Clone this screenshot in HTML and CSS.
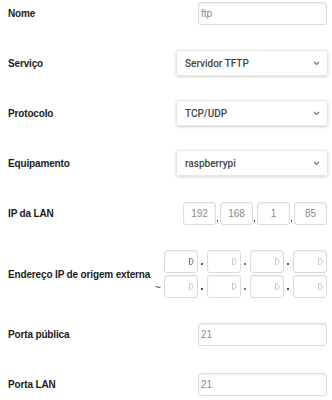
FILE: index.html
```html
<!DOCTYPE html>
<html>
<head>
<meta charset="utf-8">
<link rel="stylesheet" href="styles.css">
</head>
<body>
<div class="form">
  <div class="row">
    <span class="label">Nome</span>
    <div class="input">ftp</div>
  </div>
  <div class="row">
    <span class="label">Serviço</span>
    <div class="select"><span>Servidor TFTP</span><svg class="chev" width="7" height="5" viewBox="0 0 7 5"><polyline points="1,1 3.5,3.5 6,1" fill="none" stroke="#777" stroke-width="1.1"/></svg></div>
  </div>
  <div class="row">
    <span class="label">Protocolo</span>
    <div class="select"><span>TCP/UDP</span><svg class="chev" width="7" height="5" viewBox="0 0 7 5"><polyline points="1,1 3.5,3.5 6,1" fill="none" stroke="#777" stroke-width="1.1"/></svg></div>
  </div>
  <div class="row">
    <span class="label">Equipamento</span>
    <div class="select"><span>raspberrypi</span><svg class="chev" width="7" height="5" viewBox="0 0 7 5"><polyline points="1,1 3.5,3.5 6,1" fill="none" stroke="#777" stroke-width="1.1"/></svg></div>
  </div>
  <div class="row">
    <span class="label">IP da LAN</span>
    <div class="ip">
      <div class="oct">192</div><span class="dot"></span>
      <div class="oct">168</div><span class="dot"></span>
      <div class="oct">1</div><span class="dot"></span>
      <div class="oct">85</div>
    </div>
  </div>
  <div class="row tall">
    <span class="label shrink">Endereço IP de origem externa</span>
    <div class="ext">
      <span class="tilde">~</span>
      <div class="ext-rows">
        <div class="ext-row">
          <div class="eoct"><svg class="ph focus" width="5" height="7" viewBox="0 0 5 7"><path d="M0.5 0V7M1.5 0.5H2.6L4.4 3.5L2.6 6.5H1.5" fill="none" stroke="currentColor" stroke-width="1"/></svg></div><span class="edot"></span>
          <div class="eoct"><svg class="ph" width="5" height="7" viewBox="0 0 5 7"><path d="M0.5 0V7M1.5 0.5H2.6L4.4 3.5L2.6 6.5H1.5" fill="none" stroke="currentColor" stroke-width="1"/></svg></div><span class="edot red"></span>
          <div class="eoct"><svg class="ph" width="5" height="7" viewBox="0 0 5 7"><path d="M0.5 0V7M1.5 0.5H2.6L4.4 3.5L2.6 6.5H1.5" fill="none" stroke="currentColor" stroke-width="1"/></svg></div><span class="edot"></span>
          <div class="eoct"><svg class="ph" width="5" height="7" viewBox="0 0 5 7"><path d="M0.5 0V7M1.5 0.5H2.6L4.4 3.5L2.6 6.5H1.5" fill="none" stroke="currentColor" stroke-width="1"/></svg></div>
        </div>
        <div class="ext-row">
          <div class="eoct"><svg class="ph" width="5" height="7" viewBox="0 0 5 7"><path d="M0.5 0V7M1.5 0.5H2.6L4.4 3.5L2.6 6.5H1.5" fill="none" stroke="currentColor" stroke-width="1"/></svg></div><span class="edot"></span>
          <div class="eoct"><svg class="ph" width="5" height="7" viewBox="0 0 5 7"><path d="M0.5 0V7M1.5 0.5H2.6L4.4 3.5L2.6 6.5H1.5" fill="none" stroke="currentColor" stroke-width="1"/></svg></div><span class="edot red"></span>
          <div class="eoct"><svg class="ph" width="5" height="7" viewBox="0 0 5 7"><path d="M0.5 0V7M1.5 0.5H2.6L4.4 3.5L2.6 6.5H1.5" fill="none" stroke="currentColor" stroke-width="1"/></svg></div><span class="edot"></span>
          <div class="eoct"><svg class="ph" width="5" height="7" viewBox="0 0 5 7"><path d="M0.5 0V7M1.5 0.5H2.6L4.4 3.5L2.6 6.5H1.5" fill="none" stroke="currentColor" stroke-width="1"/></svg></div>
        </div>
      </div>
    </div>
  </div>
  <div class="row">
    <span class="label">Porta pública</span>
    <div class="input">21</div>
  </div>
  <div class="row">
    <span class="label">Porta LAN</span>
    <div class="input">21</div>
  </div>
</div>
</body>
</html>
```

FILE: styles.css
```css
html, body {
  margin: 0;
  padding: 0;
  background: #fff;
}
body {
  font-family: "Liberation Sans", Arial, sans-serif;
  width: 332px;
  height: 400px;
  overflow: hidden;
}
.form {
  display: flex;
  flex-direction: column;
  gap: 24px;
  padding: 0 5px 0 8px;
}
.row {
  height: 26px;
  display: flex;
  align-items: center;
  justify-content: space-between;
}
.row.tall {
  height: 47px;
}
.label {
  font-size: 10px;
  font-weight: bold;
  letter-spacing: -0.15px;
  color: #1e1a1a;
  white-space: nowrap;
  flex-shrink: 0;
}
.label.shrink {
  flex: 0 1 auto;
  min-width: 0;
  padding-top: 1px;
}
.input {
  box-sizing: border-box;
  width: 129px;
  height: 23px;
  border: 1px solid #dcdcdc;
  border-radius: 3px;
  box-shadow: inset 0 1px 2px rgba(0,0,0,0.08);
  font-size: 10px;
  color: #8a8a8a;
  line-height: 21px;
  padding-left: 2px;
}
.select {
  box-sizing: border-box;
  width: 152px;
  height: 26px;
  margin-right: -1px;
  border: 1px solid #e6e6e6;
  border-radius: 3px;
  box-shadow: 0 1px 3px rgba(0,0,0,0.18);
  display: flex;
  align-items: center;
  justify-content: space-between;
  padding: 0 7px 0 8px;
  font-family: Roboto, "Liberation Sans", sans-serif;
  font-size: 10px;
  font-weight: 500;
  color: #444;
}
.chev {
  display: block;
}
.ip {
  display: flex;
  align-items: flex-end;
}
.oct {
  box-sizing: border-box;
  width: 33px;
  height: 23px;
  border: 1px solid #dcdcdc;
  border-radius: 3px;
  box-shadow: inset 0 1px 2px rgba(0,0,0,0.06);
  font-size: 10px;
  color: #8a8a8a;
  text-align: center;
  line-height: 21px;
}
.dot {
  width: 4px;
  height: 6px;
  position: relative;
}
.dot::after {
  content: "";
  position: absolute;
  left: 1px;
  bottom: 3px;
  width: 1px;
  height: 2px;
  background: #555;
}
.ext {
  display: flex;
  align-items: flex-end;
  flex-shrink: 0;
}
.tilde {
  font-size: 11px;
  color: #333;
  margin-right: 3px;
  margin-bottom: 5px;
  line-height: 11px;
}
.ext-rows {
  display: flex;
  flex-direction: column;
  gap: 2px;
}
.ext-row {
  display: flex;
  align-items: center;
}
.eoct {
  box-sizing: border-box;
  width: 34px;
  height: 23px;
  border: 1px solid #dcdcdc;
  border-radius: 3px;
  box-shadow: inset 0 1px 2px rgba(0,0,0,0.06);
  display: flex;
  align-items: center;
  justify-content: flex-end;
  padding-right: 3px;
}
.ph {
  display: block;
  color: #c4c4c4;
}
.ph.focus {
  color: #3a8597;
}
.edot {
  width: 9px;
  height: 23px;
  position: relative;
}
.edot::after {
  content: "";
  position: absolute;
  left: 3px;
  top: 13px;
  width: 2px;
  height: 2px;
  background: #555;
}
.edot.red::after {
  background: #b55;
}
```
